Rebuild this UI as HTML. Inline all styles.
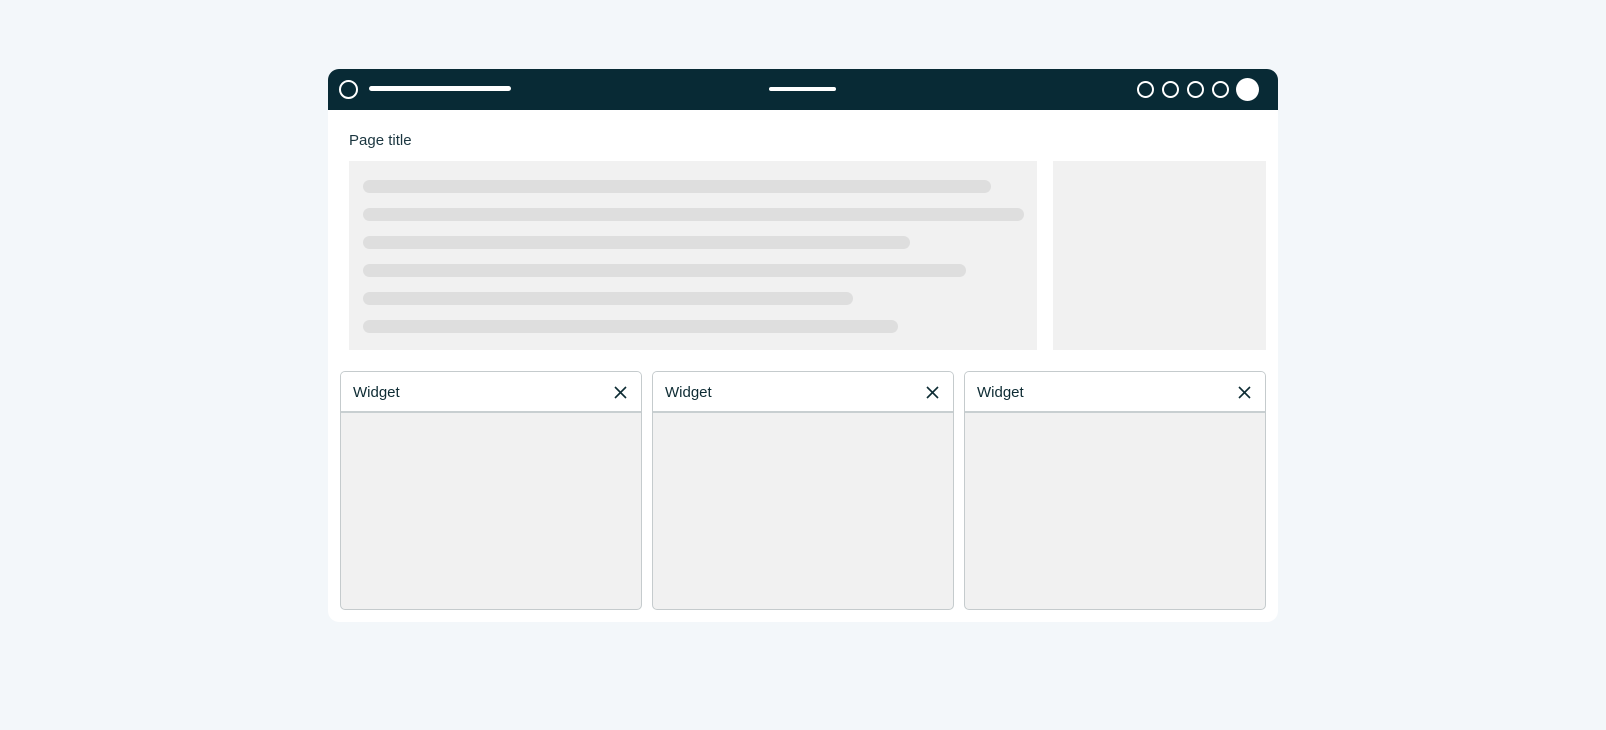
<!DOCTYPE html>
<html><head><style>
*{margin:0;padding:0;box-sizing:border-box}
body{width:1606px;height:730px;background:#f3f7fa;position:relative;font-family:"Liberation Sans",sans-serif;overflow:hidden}
.frame{position:absolute;left:328px;top:69px;width:950px;height:553px;background:#fff;border-radius:11px;overflow:hidden}
.hdr{position:absolute;left:0;top:0;width:100%;height:41px;background:#082a35}
.abs{position:absolute}
.bar{position:absolute;left:14px;height:13px;border-radius:7px;background:#dedede}
.w{position:absolute;top:302px;width:302px;height:239px;border:1px solid #c5cbcd;border-radius:5px;background:#f1f1f1;overflow:hidden}
.w .t{height:41px;background:#fff;border-bottom:2px solid #c8cfd1;font-size:15px;color:#0d2b33;padding:12px 0 0 12px;position:relative}
.w svg{position:absolute;right:14px;top:14px}
</style></head><body>
<div class="frame">
 <div class="hdr">
  <div class="abs" style="left:11px;top:11px;width:19px;height:19px;border:2.5px solid #fff;border-radius:50%"></div>
  <div class="abs" style="left:41px;top:17px;width:142px;height:5px;border-radius:3px;background:#fff"></div>
  <div class="abs" style="left:441px;top:18px;width:67px;height:4px;border-radius:2px;background:#fff"></div>
  <div class="abs" style="left:809px;top:12px;width:17px;height:17px;border:2px solid #fff;border-radius:50%"></div>
  <div class="abs" style="left:834px;top:12px;width:17px;height:17px;border:2px solid #fff;border-radius:50%"></div>
  <div class="abs" style="left:859px;top:12px;width:17px;height:17px;border:2px solid #fff;border-radius:50%"></div>
  <div class="abs" style="left:884px;top:12px;width:17px;height:17px;border:2px solid #fff;border-radius:50%"></div>
  <div class="abs" style="left:908px;top:9px;width:23px;height:23px;background:#fff;border-radius:50%"></div>
 </div>
 <div class="abs" style="left:21px;top:63px;font-size:15px;color:#1b3640">Page title</div>
 <div class="abs" style="left:21px;top:92px;width:688px;height:189px;background:#f1f1f1">
  <div class="bar" style="top:19px;width:628px"></div>
  <div class="bar" style="top:47px;width:661px"></div>
  <div class="bar" style="top:75px;width:547px"></div>
  <div class="bar" style="top:103px;width:603px"></div>
  <div class="bar" style="top:131px;width:490px"></div>
  <div class="bar" style="top:159px;width:535px"></div>
 </div>
 <div class="abs" style="left:725px;top:92px;width:213px;height:189px;background:#f1f1f1"></div>
 <div class="w" style="left:12px"><div class="t">Widget<svg width="13" height="13" viewBox="0 0 13 13"><path d="M1 1L12 12M12 1L1 12" stroke="#0d2b33" stroke-width="1.6"/></svg></div></div>
 <div class="w" style="left:324px"><div class="t">Widget<svg width="13" height="13" viewBox="0 0 13 13"><path d="M1 1L12 12M12 1L1 12" stroke="#0d2b33" stroke-width="1.6"/></svg></div></div>
 <div class="w" style="left:636px"><div class="t">Widget<svg width="13" height="13" viewBox="0 0 13 13"><path d="M1 1L12 12M12 1L1 12" stroke="#0d2b33" stroke-width="1.6"/></svg></div></div>
</div>
</body></html>
